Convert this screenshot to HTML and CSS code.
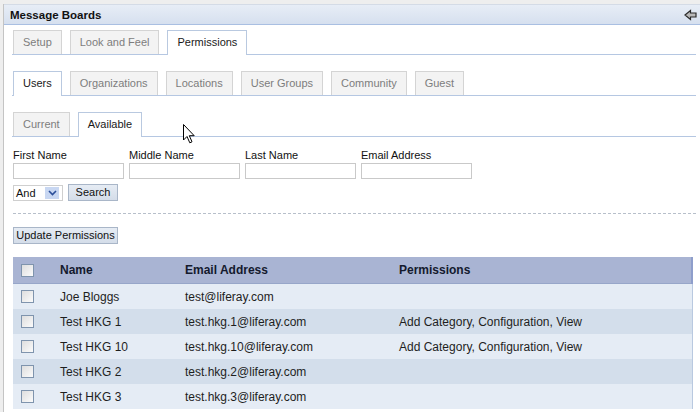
FILE: index.html
```html
<!DOCTYPE html>
<html>
<head>
<meta charset="utf-8">
<link rel="stylesheet" href="styles.css">
</head>
<body>
<div class="portlet">
  <div class="portlet-title">
    <span class="title-text">Message Boards</span>
    <svg class="back-icon" width="13" height="12" viewBox="0 0 13 12"><path d="M1 6 L6.5 1.5 V4 H12 V8 H6.5 V10.5 Z" fill="#b9b9b9" stroke="#2a2a2a" stroke-width="1.2" stroke-linejoin="miter"/></svg>
  </div>
  <div class="portlet-body">
    <ul class="tabs">
      <li class="tab">Setup</li>
      <li class="tab">Look and Feel</li>
      <li class="tab selected">Permissions</li>
    </ul>
    <ul class="tabs">
      <li class="tab selected">Users</li>
      <li class="tab">Organizations</li>
      <li class="tab">Locations</li>
      <li class="tab">User Groups</li>
      <li class="tab">Community</li>
      <li class="tab">Guest</li>
    </ul>
    <ul class="tabs tabs-last">
      <li class="tab">Current</li>
      <li class="tab selected">Available</li>
    </ul>

    <div class="search-form">
      <div class="field"><label>First Name</label><input type="text"></div>
      <div class="field"><label>Middle Name</label><input type="text"></div>
      <div class="field"><label>Last Name</label><input type="text"></div>
      <div class="field"><label>Email Address</label><input type="text"></div>
    </div>
    <div class="search-actions">
      <div class="select"><span>And</span><span class="select-btn"><svg width="9" height="6" viewBox="0 0 9 6"><path d="M1 1 L4.5 4.5 L8 1" fill="none" stroke="#2b4f9a" stroke-width="1.6"/></svg></span></div>
      <button class="btn">Search</button>
    </div>
    <div class="separator"></div>
    <button class="btn btn-update">Update Permissions</button>

    <table class="results">
      <thead>
        <tr><th class="c-check"><span class="checkbox"></span></th><th class="c-name">Name</th><th class="c-email">Email Address</th><th>Permissions</th></tr>
      </thead>
      <tbody>
        <tr><td class="c-check"><span class="checkbox"></span></td><td>Joe Bloggs</td><td>test@liferay.com</td><td></td></tr>
        <tr class="alt"><td class="c-check"><span class="checkbox"></span></td><td>Test HKG 1</td><td>test.hkg.1@liferay.com</td><td>Add Category, Configuration, View</td></tr>
        <tr><td class="c-check"><span class="checkbox"></span></td><td>Test HKG 10</td><td>test.hkg.10@liferay.com</td><td>Add Category, Configuration, View</td></tr>
        <tr class="alt"><td class="c-check"><span class="checkbox"></span></td><td>Test HKG 2</td><td>test.hkg.2@liferay.com</td><td></td></tr>
        <tr><td class="c-check"><span class="checkbox"></span></td><td>Test HKG 3</td><td>test.hkg.3@liferay.com</td><td></td></tr>
      </tbody>
    </table>
  </div>
  <svg class="cursor" width="13" height="20" viewBox="0 0 13 20"><path d="M0.5 0.5 V16 L4 12.5 L6.8 18.8 L9 17.8 L6.3 11.7 H11.2 Z" fill="#fff" stroke="#000" stroke-width="1"/></svg>
</div>
</body>
</html>
```

FILE: styles.css
```css
html, body {
  margin: 0;
  padding: 0;
}
body {
  background: #eeeeee;
  font-family: "Liberation Sans", Arial, sans-serif;
  font-size: 11px;
  color: #222;
  width: 700px;
  height: 412px;
  overflow: hidden;
}
.portlet {
  position: relative;
  margin: 4px 0 0 3px;
  border-left: 1px solid #c4c4c4;
  background: #ffffff;
  height: 408px;
}
.portlet-title {
  display: flex;
  align-items: center;
  justify-content: space-between;
  height: 19px;
  padding: 0 3px 0 6px;
  background: linear-gradient(#e7edf6, #d6e0ef);
  border-top: 1px solid #d4dbe6;
  border-bottom: 1px solid #a9bfe2;
}
.title-text {
  font-weight: bold;
  font-size: 11.5px;
  color: #111;
}
.back-icon {
  display: block;
}
.portlet-body {
  padding: 5px 4px 0 9px;
}
.tabs {
  display: flex;
  gap: 8px;
  list-style: none;
  margin: 0 0 16px -1px;
  padding: 0 0 0 1px;
  border-bottom: 1px solid #b5c7e2;
}
.tabs-last {
  margin-bottom: 11px;
}
.tab {
  height: 23px;
  line-height: 23px;
  padding: 0 9px;
  background: #f3f3f3;
  border: 1px solid #d4d4d4;
  border-bottom: none;
  color: #7d7d7d;
  font-size: 11px;
}
.tab.selected {
  background: #ffffff;
  color: #1a1a1a;
  border-color: #b9c9e0;
  margin-bottom: -1px;
  height: 24px;
}
.search-form {
  display: grid;
  grid-template-columns: repeat(4, 111px);
  column-gap: 5px;
}
.field {
  display: flex;
  flex-direction: column;
}
.field label {
  font-size: 11px;
  color: #111;
  line-height: 14px;
}
.field input {
  box-sizing: border-box;
  width: 111px;
  height: 16px;
  margin: 1px 0 0 0;
  border: 1px solid #c9c9c9;
  padding: 0;
}
.search-actions {
  display: flex;
  align-items: center;
  gap: 5px;
  margin-top: 5px;
}
.select {
  box-sizing: border-box;
  width: 50px;
  height: 16px;
  border: 1px solid #cfcfcf;
  display: flex;
  align-items: center;
  justify-content: space-between;
  padding: 0 3px 0 2px;
  font-size: 11px;
  color: #111;
}
.select-btn {
  width: 14px;
  height: 12px;
  background: #c8d7f2;
  display: flex;
  align-items: center;
  justify-content: center;
}
.select-btn svg { display: block; }
.btn {
  box-sizing: border-box;
  height: 17px;
  padding: 0 8px;
  font-family: "Liberation Sans", Arial, sans-serif;
  font-size: 11px;
  color: #111;
  background: linear-gradient(#e6ecf4, #d4dde9);
  border: 1px solid #a9b6c8;
  border-radius: 0;
  line-height: 15px;
}
.search-actions .btn {
  width: 50px;
  padding: 0;
}
.separator {
  margin-top: 12px;
  border-top: 1px dashed #b7bfca;
  height: 0;
}
.btn-update {
  display: block;
  margin-top: 13px;
  width: 105px;
  padding: 0;
}
.results {
  margin-top: 13px;
  width: 680px;
  border-collapse: collapse;
  font-size: 12px;
  border-right: 1px solid #b9c9e0;
}
.results th {
  background: #a9b4d3;
  height: 26px;
  text-align: left;
  font-weight: bold;
  color: #141a2e;
  padding: 0 0 0 8px;
  border-bottom: 1px solid #97a6c9;
}
.results thead tr { border-right: 2px solid #8e9ecb; }
.results td {
  height: 25px;
  padding: 0 0 0 8px;
  color: #1e1e1e;
  background: #e5ecf5;
}
.results tr.alt td {
  background: #d3deeb;
}
.results .c-check {
  width: 31px;
}
.results td:nth-child(2), .results th:nth-child(2) { width: 117px; }
.results td:nth-child(3), .results th:nth-child(3) { width: 206px; }
.checkbox {
  display: block;
  box-sizing: border-box;
  width: 13px;
  height: 13px;
  border: 1px solid #7f94ad;
  background: linear-gradient(135deg, #dedede, #fbfbfb);
}
.cursor {
  position: absolute;
  left: 179px;
  top: 120px;
}
```
